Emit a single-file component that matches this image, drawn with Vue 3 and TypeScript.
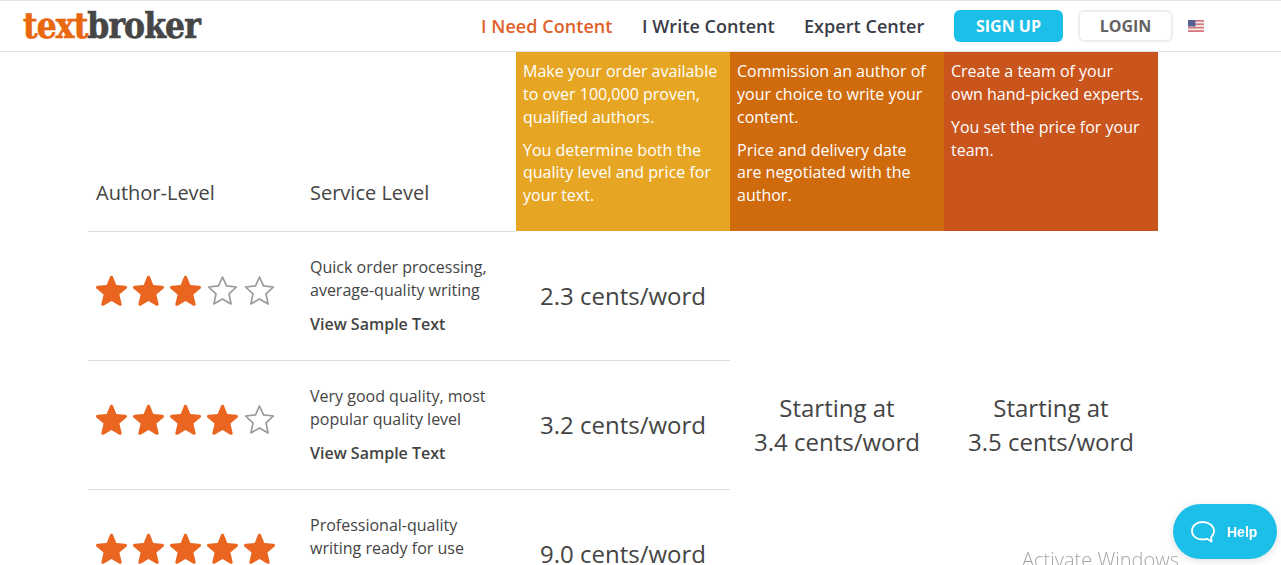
<script setup lang="ts">
interface Row { filled: number; lines: string[]; price: string; sample: boolean }
const rows: Row[] = [
  { filled: 3, lines: ['Quick order processing,', 'average-quality writing'], price: '2.3 cents/word', sample: true },
  { filled: 4, lines: ['Very good quality, most', 'popular quality level'], price: '3.2 cents/word', sample: true },
  { filled: 5, lines: ['Professional-quality', 'writing ready for use'], price: '9.0 cents/word', sample: false },
]
const star = 'M15.5 0.8 C16.3 0.8 16.8 1.3 17.1 2 L20.3 9.9 L29.2 10.7 C31 10.9 31.6 12.6 30.3 13.8 L23.4 19.6 L25.6 28.7 C26 30.4 24.4 31.4 23 30.5 L15.5 25.9 L8 30.5 C6.6 31.4 5 30.4 5.4 28.7 L7.6 19.6 L0.7 13.8 C-0.6 12.6 0 10.9 1.8 10.7 L10.7 9.9 L13.9 2 C14.2 1.3 14.7 0.8 15.5 0.8 Z'
</script>

<template>
  <div class="page">
    <header class="top">
      <div class="logo"><span class="logo-a">text</span><span class="logo-b">broker</span></div>
      <nav class="nav">
        <a class="active">I Need Content</a>
        <a>I Write Content</a>
        <a>Expert Center</a>
      </nav>
      <button class="signup">SIGN UP</button>
      <button class="login">LOGIN</button>
      <svg class="flag" width="16" height="12" viewBox="0 0 16 12">
        <rect width="16" height="12" fill="#f3eeee" />
        <rect y="0" width="16" height="1.7" fill="#d9777f" />
        <rect y="3.4" width="16" height="1.7" fill="#d9777f" />
        <rect y="6.8" width="16" height="1.7" fill="#d9777f" />
        <rect y="10.2" width="16" height="1.8" fill="#d9777f" />
        <rect width="7.5" height="6.5" fill="#57608f" />
      </svg>
    </header>

    <main class="table">
      <div class="head-label">Author-Level</div>
      <div class="head-label">Service Level</div>
      <div class="plan plan-a">
        <p>Make your order available to over 100,000 proven, qualified authors.</p>
        <p>You determine both the quality level and price for your text.</p>
      </div>
      <div class="plan plan-b">
        <p>Commission an author of your choice to write your content.</p>
        <p>Price and delivery date are negotiated with the author.</p>
      </div>
      <div class="plan plan-c">
        <p>Create a team of your own hand-picked experts.</p>
        <p>You set the price for your team.</p>
      </div>

      <template v-for="row in rows" :key="row.price">
        <div class="cell stars">
          <svg v-for="n in 5" :key="n" class="star" width="31" height="32" viewBox="0 0 31 32">
            <path v-if="n <= row.filled" :d="star" fill="#ea651f" />
            <path v-else d="M15.5 2 L19.5 10.9 L29.4 12 L22 18.9 L24.1 28.9 L15.5 24 L6.9 28.9 L9 18.9 L1.6 12 L11.5 10.9 Z" fill="#fff" stroke="#9a9a9a" stroke-width="1.7" stroke-linejoin="round" />
          </svg>
        </div>
        <div class="cell service">
          <div v-for="line in row.lines" :key="line">{{ line }}</div>
          <a v-if="row.sample" class="sample">View Sample Text</a>
        </div>
        <div class="cell price">{{ row.price }}</div>
      </template>

      <div class="span span-b">Starting at<br />3.4 cents/word</div>
      <div class="span span-c">Starting at<br />3.5 cents/word</div>
    </main>

    <div class="watermark">Activate Windows</div>
    <button class="help">
      <svg width="26" height="24" viewBox="0 0 26 24" fill="none">
        <path d="M12.5 2C6.5 2 2 5.7 2 10.8C2 16 6.5 19.5 12.5 19.5C14 19.5 15.5 19.3 17 18.8L21.5 21.5L21.2 17C23.2 15.4 24 13.2 24 10.8C24 5.7 18.6 2 12.5 2Z" stroke="#fff" stroke-width="1.8" stroke-linejoin="round" />
      </svg>
      <span>Help</span>
    </button>
  </div>
</template>

<style>
html, body { margin: 0; overflow: hidden; background: #fff; }
</style>

<style scoped>
.page {
  width: 1281px;
  height: 565px;
  overflow: hidden;
  font-family: "Open Sans", "Liberation Sans", sans-serif;
  color: #444;
}
.top {
  box-sizing: border-box;
  height: 52px;
  display: flex;
  align-items: center;
  border-top: 1px solid #e3e3e3;
  border-bottom: 1px solid #e3e3e3;
  padding-left: 23px;
}
.logo {
  width: 458px;
  font-family: "DejaVu Serif Condensed", "DejaVu Serif", serif;
  font-stretch: condensed;
  font-weight: 700;
  font-size: 35px;
  letter-spacing: -0.9px;
  -webkit-text-stroke: 0.6px currentColor;
  line-height: 50px;
  height: 50px;
  margin-top: -1px;
}
.logo-a { color: #e8670f; }
.logo-b { color: #464646; }
.nav { display: flex; font-size: 18px; font-weight: 550; letter-spacing: 0.05px; color: #3a3d48; }
.nav a { white-space: nowrap; }
.nav a:nth-child(1) { width: 161px; }
.nav a:nth-child(2) { width: 162px; }
.nav a:nth-child(3) { width: 119px; }
.nav .active { color: #e0622a; }
.signup, .login {
  box-sizing: border-box;
  font-family: inherit;
  font-weight: 700;
  font-size: 16px;
  height: 32px;
  border-radius: 6px;
  padding: 0;
}
.signup { width: 109px; margin-left: 31px; background: #1cbfe7; border: 0; color: #fff; }
.login { width: 95px; margin-left: 15px; background: #fff; border: 2px solid #eeeeee; color: #636363; }
.flag { margin-left: 15px; }
.table {
  width: 1070px;
  margin-left: 88px;
  display: grid;
  grid-template-columns: repeat(5, 214px);
  grid-template-rows: 180px 129px 129px 129px;
}
.head-label {
  font-size: 20px;
  padding: 0 8px 25px;
  display: flex;
  align-items: flex-end;
  border-bottom: 1px solid #dcdcdc;
}
.plan {
  box-sizing: border-box;
  padding: 8px 10px 0 7px;
  color: #fff;
  font-size: 16px;
  line-height: 1.42857;
  margin-bottom: 1px;
}
.plan p { margin: 0 0 10px; }
.plan-a { background: #e6a624; }
.plan-b { background: #cf6a0d; }
.plan-c { background: #c9541c; }
.cell { box-sizing: border-box; border-bottom: 1px solid #dcdcdc; }
.stars { display: flex; gap: 6px; padding: 43px 0 0 8px; }
.star { display: block; }
.service { padding: 24px 8px 0; font-size: 16px; line-height: 23px; }
.sample { display: block; margin-top: 11px; font-weight: 600; }
.price { font-size: 24px; text-align: center; padding-top: 47px; }
.span {
  grid-row: 2 / 5;
  display: flex;
  align-items: center;
  justify-content: center;
  text-align: center;
  font-size: 24px;
  line-height: 34px;
  flex-direction: column;
  padding-bottom: 2px;
  box-sizing: border-box;
}
.span-b { grid-column: 4; }
.span-c { grid-column: 5; }
.watermark {
  position: fixed;
  left: 1022px;
  top: 546px;
  font-size: 20px;
  font-weight: 300;
  color: #a6a6a6;
}
.help {
  position: fixed;
  left: 1173px;
  top: 504px;
  width: 104px;
  height: 55px;
  border: 0;
  border-radius: 28px;
  background: #1cbfe7;
  color: #fff;
  display: flex;
  align-items: center;
  gap: 11px;
  padding: 0 0 0 17px;
  font-family: "Liberation Sans", sans-serif;
  font-weight: 700;
  font-size: 14px;
  box-shadow: 0 2px 8px rgba(0, 0, 0, 0.12);
}
</style>
